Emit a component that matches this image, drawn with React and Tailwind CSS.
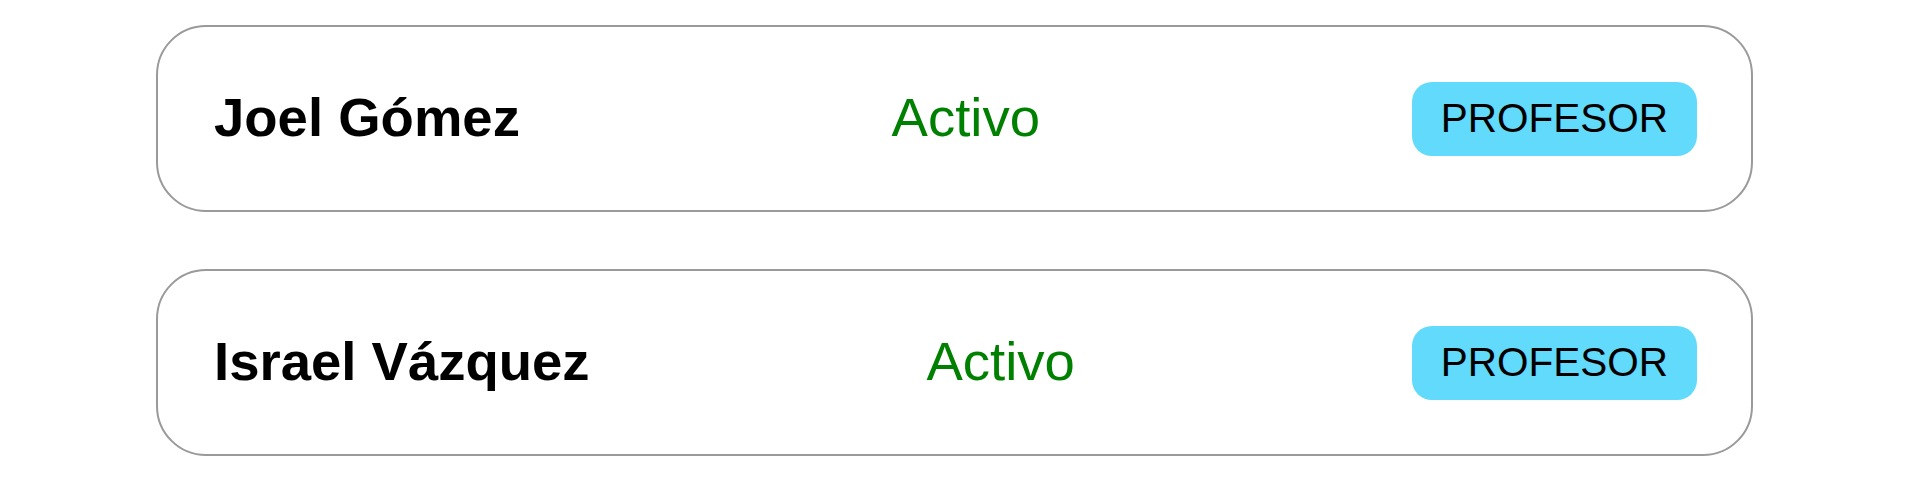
const users = [
  { name: "Joel Gómez", status: "Activo", role: "PROFESOR" },
  { name: "Israel Vázquez", status: "Activo", role: "PROFESOR" },
];

const UserRow = ({ name, status, role }) => (
  <div className="flex items-center justify-between h-[187px] w-[1597px] rounded-[50px] border-2 border-[#9a9a9a] bg-white pl-[56px] pr-[54px]">
    <span className="text-[54.5px] font-bold text-black leading-none">{name}</span>
    <span className="text-[54.5px] text-[#008000] leading-none">{status}</span>
    <span className="flex items-center h-[74px] px-[29px] rounded-[20px] bg-[#61dafb] text-[40.5px] text-black leading-none">
      {role}
    </span>
  </div>
);

export default function App() {
  return (
    <div
      className="min-h-[481px] bg-white pt-[25px] pl-[156px] flex flex-col gap-[57px]"
      style={{ fontFamily: '"Liberation Sans", Arial, sans-serif' }}
    >
      {users.map((u) => (
        <UserRow key={u.name} {...u} />
      ))}
    </div>
  );
}
